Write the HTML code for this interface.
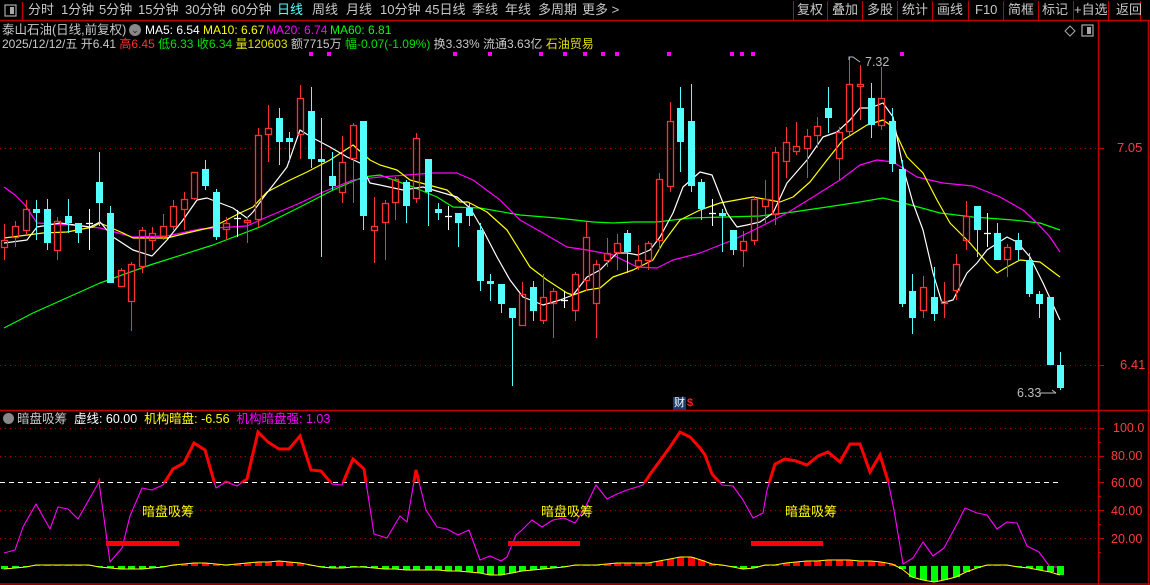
<!DOCTYPE html>
<html><head><meta charset="utf-8">
<style>
*{margin:0;padding:0;box-sizing:border-box}
body{width:1150px;height:585px;background:#000;overflow:hidden;position:relative;font-family:"Liberation Sans","Noto Sans CJK SC",sans-serif;font-size:12px;color:#c8c8c8}
.t{position:absolute;white-space:nowrap;line-height:14px}
.nav{position:absolute;top:2px;font-size:13px;color:#c8c8c8;line-height:16px}
svg{position:absolute;left:0;top:0}
</style></head><body>
<svg id="s" width="1150" height="585" xmlns="http://www.w3.org/2000/svg">
<g stroke="#c00000" stroke-width="1.5" fill="none">
<line x1="0" y1="20.5" x2="1150" y2="20.5"/>
<line x1="22.5" y1="2" x2="22.5" y2="20"/>
<line x1="1098.5" y1="20" x2="1098.5" y2="585"/>
<line x1="0" y1="410.5" x2="1150" y2="410.5"/>
<line x1="0" y1="584" x2="1150" y2="584"/>
<line x1="1148.5" y1="20" x2="1148.5" y2="585"/>
</g>
<g stroke="#c00000" stroke-width="1">
<line x1="793.5" y1="1" x2="793.5" y2="20"/><line x1="827.5" y1="1" x2="827.5" y2="20"/><line x1="862.5" y1="1" x2="862.5" y2="20"/><line x1="897.5" y1="1" x2="897.5" y2="20"/><line x1="932.5" y1="1" x2="932.5" y2="20"/><line x1="968.5" y1="1" x2="968.5" y2="20"/><line x1="1003.5" y1="1" x2="1003.5" y2="20"/><line x1="1038.5" y1="1" x2="1038.5" y2="20"/><line x1="1073.5" y1="1" x2="1073.5" y2="20"/><line x1="1108.5" y1="1" x2="1108.5" y2="20"/><line x1="1140.5" y1="1" x2="1140.5" y2="20"/>
</g>
<rect x="5" y="5" width="11" height="11" fill="none" stroke="#aaa" stroke-width="1.2"/><rect x="10" y="7" width="4" height="7" fill="#aaa"/>
<path d="M1070 26 L1075 31 L1070 36 L1065 31Z" fill="none" stroke="#aaa"/>
<rect x="1082" y="25" width="11" height="11" fill="none" stroke="#aaa" stroke-width="1.2"/><rect x="1087" y="27" width="4" height="7" fill="#aaa"/>
<g stroke="#a00000" stroke-dasharray="1,4" stroke-width="1">
<line x1="0" y1="148.5" x2="1098" y2="148.5"/><line x1="0" y1="365.5" x2="1098" y2="365.5"/>
<line x1="0" y1="428.5" x2="1098" y2="428.5"/><line x1="0" y1="456.5" x2="1098" y2="456.5"/><line x1="0" y1="510.5" x2="1098" y2="510.5"/><line x1="0" y1="538.5" x2="1098" y2="538.5"/>
</g>
<line x1="0" y1="482.5" x2="1060" y2="482.5" stroke="#fff" stroke-dasharray="5,4"/>
<g stroke="#c00000"><line x1="1098" y1="148.5" x2="1104" y2="148.5"/><line x1="1098" y1="365.5" x2="1104" y2="365.5"/>
<line x1="1098" y1="428.5" x2="1104" y2="428.5"/><line x1="1098" y1="456.5" x2="1104" y2="456.5"/><line x1="1098" y1="482.5" x2="1104" y2="482.5"/><line x1="1098" y1="510.5" x2="1104" y2="510.5"/><line x1="1098" y1="538.5" x2="1104" y2="538.5"/>
<line x1="1098" y1="442.5" x2="1101" y2="442.5"/><line x1="1098" y1="469.5" x2="1101" y2="469.5"/><line x1="1098" y1="496.5" x2="1101" y2="496.5"/><line x1="1098" y1="524.5" x2="1101" y2="524.5"/><line x1="1098" y1="552.5" x2="1101" y2="552.5"/></g>
<g fill="#ff00ff" id="dots"></g>
<g id="ma"></g>
<g id="cd"></g>
<g id="ind"></g>
<g fill="#ff0000"><rect x="106" y="541" width="73" height="5"/><rect x="508" y="541" width="72" height="5"/><rect x="751" y="541" width="72" height="5"/></g>
<rect x="673" y="397" width="13" height="13" fill="#1a3a6a"/>
<g stroke="#bbb" fill="none"><path d="M849 60 L849 57 L853 57 L860 62"/><path d="M1040 393 L1056 393 M1052 390 L1056 393"/></g>
</svg>
<div class="nav" style="left:28px">分时</div>
<div class="nav" style="left:61px">1分钟</div>
<div class="nav" style="left:99px">5分钟</div>
<div class="nav" style="left:138px">15分钟</div>
<div class="nav" style="left:185px">30分钟</div>
<div class="nav" style="left:231px">60分钟</div>
<div class="nav" style="left:277px;color:#54ffff">日线</div>
<div class="nav" style="left:312px">周线</div>
<div class="nav" style="left:346px">月线</div>
<div class="nav" style="left:380px">10分钟</div>
<div class="nav" style="left:425px">45日线</div>
<div class="nav" style="left:472px">季线</div>
<div class="nav" style="left:505px">年线</div>
<div class="nav" style="left:538px">多周期</div>
<div class="nav" style="left:582px">更多 &gt;</div>
<div class="nav" style="left:797px">复权</div>
<div class="nav" style="left:832px">叠加</div>
<div class="nav" style="left:867px">多股</div>
<div class="nav" style="left:902px">统计</div>
<div class="nav" style="left:937px">画线</div>
<div class="nav" style="left:975px">F10</div>
<div class="nav" style="left:1008px">简框</div>
<div class="nav" style="left:1042px">标记</div>
<div class="nav" style="left:1074px">+自选</div>
<div class="nav" style="left:1116px">返回</div>

<div class="t" style="left:2px;top:23px;font-size:12.5px">泰山石油(日线,前复权)</div>
<div class="t" style="left:129px;top:24px;width:12px;height:12px;border-radius:6px;background:#888;color:#222;font-size:9px;text-align:center;line-height:12px">⌄</div>
<div class="t" style="left:145px;top:23px;color:#fff">MA5: 6.54</div>
<div class="t" style="left:203px;top:23px;color:#ffff00">MA10: 6.67</div>
<div class="t" style="left:266px;top:23px;color:#ff00ff">MA20: 6.74</div>
<div class="t" style="left:330px;top:23px;color:#00ff00">MA60: 6.81</div>
<div class="t" style="left:2px;top:37px">2025/12/12/五 开6.41 <span style="color:#ff3232">高6.45</span> <span style="color:#00e000">低6.33</span> <span style="color:#00e000">收6.34</span> <span style="color:#e0e000">量120603</span> 额7715万 <span style="color:#00e000">幅-0.07(-1.09%)</span> 换3.33% 流通3.63亿 <span style="color:#e0e000">石油贸易</span></div>
<div class="t" style="left:865px;top:55px;font-size:12.5px;color:#bbb">7.32</div>
<div class="t" style="left:1017px;top:386px;font-size:12.5px;color:#bbb">6.33</div>
<div class="t" style="left:1117px;top:141px;font-size:13px;color:#ff3c3c">7.05</div>
<div class="t" style="left:1120px;top:358px;font-size:13px;color:#ff3c3c">6.41</div>
<div class="t" style="left:674px;top:397px;font-size:11px;color:#fff;line-height:13px">财</div>
<div class="t" style="left:687px;top:397px;font-size:11px;color:#ff2020;font-weight:bold;line-height:13px">$</div>

<div class="t" style="left:3px;top:413px;width:11px;height:11px;border-radius:6px;background:#888"></div>
<div class="t" style="left:17px;top:412px;font-size:12.5px">暗盘吸筹 <span style="color:#fff">&nbsp;虚线: 60.00</span> <span style="color:#ffff00">&nbsp;机构暗盘: -6.56</span> <span style="color:#ff00ff">&nbsp;机构暗盘强: 1.03</span></div>
<div class="t" style="left:142px;top:505px;font-size:13px;color:#ffff00">暗盘吸筹</div>
<div class="t" style="left:541px;top:505px;font-size:13px;color:#ffff00">暗盘吸筹</div>
<div class="t" style="left:785px;top:505px;font-size:13px;color:#ffff00">暗盘吸筹</div>
<div class="t" style="left:1113px;top:421px;font-size:12.5px;color:#ff3c3c">100.0</div>
<div class="t" style="left:1111px;top:449px;font-size:12.5px;color:#ff3c3c">80.00</div>
<div class="t" style="left:1111px;top:476px;font-size:12.5px;color:#ff3c3c">60.00</div>
<div class="t" style="left:1111px;top:504px;font-size:12.5px;color:#ff3c3c">40.00</div>
<div class="t" style="left:1111px;top:532px;font-size:12.5px;color:#ff3c3c">20.00</div>
<script>
var NS="http://www.w3.org/2000/svg";
function el(p,t,a){var e=document.createElementNS(NS,t);for(var k in a)e.setAttribute(k,a[k]);p.appendChild(e);return e;}
var dots=document.getElementById('dots');
[311,329,455,490,541,565,585,603,617,669,732,742,753,902].forEach(function(x){el(dots,'rect',{x:x-2,y:52,width:4,height:4});});
var C=[[4,240,248,224,260,'r'],[15,226,238,221,247,'r'],[26,209,231,200,235,'r'],[36,209,213,200,240,'c'],[47,209,243,199,250,'c'],[57,221,251,217,260,'r'],[68,216,223,199,233,'c'],[78,223,233,223,243,'c'],[89,223,223,209,250,'w'],[99,182,203,152,226,'c'],[110,213,283,206,283,'c'],[121,270,287,268,287,'r'],[131,264,302,262,331,'r'],[142,230,267,227,273,'r'],[152,233,241,227,250,'r'],[163,226,237,214,240,'r'],[173,206,227,200,230,'r'],[184,199,210,192,230,'r'],[194,172,199,172,200,'r'],[205,169,186,160,190,'c'],[216,192,237,189,240,'c'],[226,223,230,217,240,'r'],[237,218,218,210,237,'w'],[247,220,223,217,243,'r'],[258,135,220,128,227,'r'],[268,128,135,105,162,'r'],[279,118,142,108,165,'c'],[289,138,142,132,162,'c'],[300,98,135,85,159,'r'],[311,111,159,87,168,'c'],[321,159,162,118,257,'c'],[332,176,186,152,190,'c'],[342,162,193,136,203,'r'],[353,125,159,123,203,'r'],[363,121,216,121,230,'c'],[374,226,231,197,263,'r'],
[385,203,223,200,260,'r'],[395,179,203,177,220,'r'],[406,182,206,180,223,'c'],[416,138,199,133,203,'r'],[428,159,192,159,226,'c'],[438,209,213,203,220,'c'],[448,216,216,206,230,'w'],[458,213,223,213,247,'c'],[469,208,216,203,226,'c'],[480,230,281,223,291,'c'],[490,281,284,274,301,'c'],[501,284,304,284,313,'c'],[512,308,318,308,386,'c'],[522,294,326,282,326,'r'],[533,287,311,281,321,'c'],[543,297,321,274,324,'r'],[553,291,304,288,338,'r'],[564,300,300,291,308,'w'],[575,274,311,272,321,'r'],[586,237,281,222,291,'r'],[596,264,304,260,338,'r'],[607,253,261,238,267,'r'],[617,243,253,234,270,'r'],[627,233,252,230,273,'c'],[638,260,267,245,270,'r'],[648,243,261,241,270,'r'],[659,179,241,173,250,'r'],[670,121,187,102,192,'r'],[680,108,142,87,172,'c'],[691,121,186,84,192,'c'],[701,182,209,179,220,'c'],[712,213,213,199,226,'w'],[722,213,216,209,252,'c'],[733,230,250,230,255,'c'],[743,241,251,231,267,'r'],[754,199,241,197,245,'r'],
[765,199,207,180,223,'r'],[775,152,215,147,225,'r'],[786,142,162,127,178,'r'],[796,146,152,122,155,'r'],[807,136,149,129,178,'r'],[817,126,136,117,148,'r'],[828,108,118,87,133,'c'],[839,132,159,127,180,'r'],[849,84,132,57,135,'r'],[860,84,87,65,120,'r'],[871,98,125,83,138,'c'],[881,98,126,67,130,'r'],[892,121,164,108,172,'c'],[902,169,304,160,307,'c'],[912,291,318,274,334,'c'],[923,287,311,276,318,'r'],[934,297,314,267,321,'c'],[944,301,304,282,318,'r'],[956,264,291,254,300,'r'],[966,216,241,201,250,'r'],[977,206,230,206,257,'c'],[987,233,233,213,247,'w'],[997,233,260,223,260,'c'],[1007,247,260,244,277,'r'],[1018,240,250,233,260,'c'],[1029,260,294,253,297,'c'],[1039,294,304,291,318,'c'],[1050,297,365,297,365,'c'],[1060,365,388,352,390,'c']];
var cd=document.getElementById('cd');
C.forEach(function(c){var x=c[0],t=c[1],b=c[2],h=c[3],l=c[4],k=c[5];
 if(k=='c'){el(cd,'line',{x1:x+.5,y1:h,x2:x+.5,y2:l,stroke:'#54ffff','stroke-width':1});el(cd,'rect',{x:x-3,y:t,width:7,height:Math.max(b-t,2),fill:'#54ffff'});}
 else if(k=='r'){var s='#ff3232';el(cd,'line',{x1:x+.5,y1:h,x2:x+.5,y2:t,stroke:s});el(cd,'line',{x1:x+.5,y1:b,x2:x+.5,y2:l,stroke:s});el(cd,'rect',{x:x-2.5,y:t+.5,width:6,height:Math.max(b-t-1,1.5),fill:'none',stroke:s,'stroke-width':1.3});}
 else{el(cd,'line',{x1:x+.5,y1:h,x2:x+.5,y2:l,stroke:'#fff'});el(cd,'line',{x1:x-3,y1:t+.5,x2:x+4,y2:t+.5,stroke:'#fff','stroke-width':1.3});}
});
var ma=document.getElementById('ma');
function pl(g,pts,col,w){el(g,'polyline',{points:pts,fill:'none',stroke:col,'stroke-width':w||1,'stroke-linejoin':'round'});}
pl(ma,"4,328 33,313 100,283 150,265 213,245 260,227 300,207 333,190 363,177 380,175 413,187 437,197 453,207 480,208 520,215 557,218 593,222 613,223 633,222 657,222 690,218 760,216 793,212 827,207 860,202 883,198 900,202 940,213 973,217 1013,220 1040,223 1060,230","#00ff00",1.2);
pl(ma,"4,187 15,195 25,205 37,223 70,225 100,228 133,237 167,236 200,229 247,226 267,217 300,203 323,192 353,180 380,177 433,173 457,173 473,180 500,200 520,220 543,233 567,247 587,250 613,255 637,267 657,268 673,260 700,253 733,240 760,227 787,213 813,197 840,180 860,165 877,160 893,162 917,177 943,183 973,186 1000,197 1023,210 1037,223 1050,237 1060,252","#ff00ff",1.2);
pl(ma,"4,238 43,233 67,232 93,227 100,223 123,233 133,238 167,238 187,233 213,227 240,213 253,207 267,192 290,180 307,172 330,160 353,145 370,160 380,165 397,170 410,180 447,190 460,202 468,202 487,212 507,230 530,267 547,280 567,293 573,295 587,290 600,288 613,277 633,270 653,260 663,243 680,220 700,210 720,203 753,197 780,202 793,197 810,182 827,160 843,140 867,125 883,120 893,127 907,157 923,173 937,200 950,223 970,243 987,263 997,273 1007,267 1020,260 1040,262 1060,277","#ffff00",1.2);
pl(ma,"4,243 27,240 37,227 60,223 90,227 100,222 113,237 133,250 152,256 167,240 183,220 197,200 207,198 233,208 247,218 253,212 263,198 277,180 287,167 300,130 313,138 330,147 347,157 360,163 370,183 380,185 403,190 423,187 457,197 470,208 483,230 497,257 510,280 523,297 543,305 560,300 573,295 587,277 600,270 617,253 627,253 638,255 650,250 660,237 673,213 683,187 700,172 712,175 727,213 737,227 747,225 760,222 773,213 787,183 807,160 823,137 837,132 850,120 860,108 870,108 883,103 893,117 903,167 913,203 923,230 933,273 942,303 953,300 967,273 977,263 987,250 1007,237 1017,242 1030,257 1043,283 1060,320","#ffffff",1.2);
var ind=document.getElementById('ind');
var ip="4,553 15,550 23,527 36,504 50,529 58,507 68,509 78,519 99,482 110,562 122,548 130,516 142,488 152,490 163,485 173,469 184,463 194,443 205,450 216,488 226,482 237,486 247,479 258,432 268,442 279,449 289,449 300,436 311,470 321,471 332,484 342,485 353,459 364,469 374,534 387,538 400,516 407,522 416,470 426,510 437,527 447,529 458,535 469,530 480,560 490,556 501,561 507,557 516,535 522,530 532,520 542,527 553,520 564,518 575,523 585,508 596,485 607,499 617,494 627,490 637,487 643,485 651,473 662,458 670,447 680,432 690,437 700,448 705,455 712,474 722,485 733,486 743,500 753,518 763,513 767,490 775,464 785,459 796,461 807,465 818,456 828,452 840,462 850,444 860,444 870,472 880,455 888,481 894,510 903,564 913,558 923,542 933,556 944,548 957,524 965,508 977,513 987,515 997,529 1007,522 1017,523 1027,546 1039,552 1050,567 1060,567";
var cp=el(ind,'clipPath',{id:'cl'});el(cp,'rect',{x:0,y:400,width:1100,height:82.5});
pl(ind,ip,"#ff00ff",1.1);
var r=el(ind,'polyline',{points:ip,fill:'none',stroke:'#ff0000','stroke-width':3,'clip-path':'url(#cl)'});
var K=[[4,-3],[20,-2],[30,0],[40,1],[60,1],[90,0],[105,-1],[120,-3],[140,-3],[160,-1],[175,1],[200,3],[215,2],[230,1],[250,3],[275,5],[290,4],[310,1],[330,-2],[345,-2],[365,0],[380,-3],[430,-4],[470,-6],[490,-9],[500,-9],[515,-6],[540,-3],[560,-2],[575,0],[590,1],[620,3],[650,3],[665,6],[680,9],[690,9],[700,6],[712,2],[725,0],[745,-3],[765,0],[790,3],[810,5],[840,6],[870,5],[890,3],[900,0],[903,-5],[913,-12],[934,-16],[955,-11],[977,-2],[990,1],[1010,1],[1020,-1],[1040,-4],[1060,-9]];
function iv(x){for(var i=0;i<K.length-1;i++){if(x<=K[i+1][0]){var a=K[i],b=K[i+1];return a[1]+(b[1]-a[1])*(x-a[0])/(b[0]-a[0]);}}return K[K.length-1][1];}
var base=566,yp=[];
C.forEach(function(c){var x=c[0],v=Math.round(iv(x));if(v==0)v=(iv(x)>=0?1:-1);
 if(v>0)el(ind,'rect',{x:x-3,y:base-v,width:7,height:v,fill:'#ff0000'});
 else el(ind,'rect',{x:x-3,y:base,width:7,height:-v,fill:'#00ff00'});
 yp.push(x+','+(base-v));});
pl(ind,yp.join(' '),"#ffff00",1);
</script>
</body></html>
